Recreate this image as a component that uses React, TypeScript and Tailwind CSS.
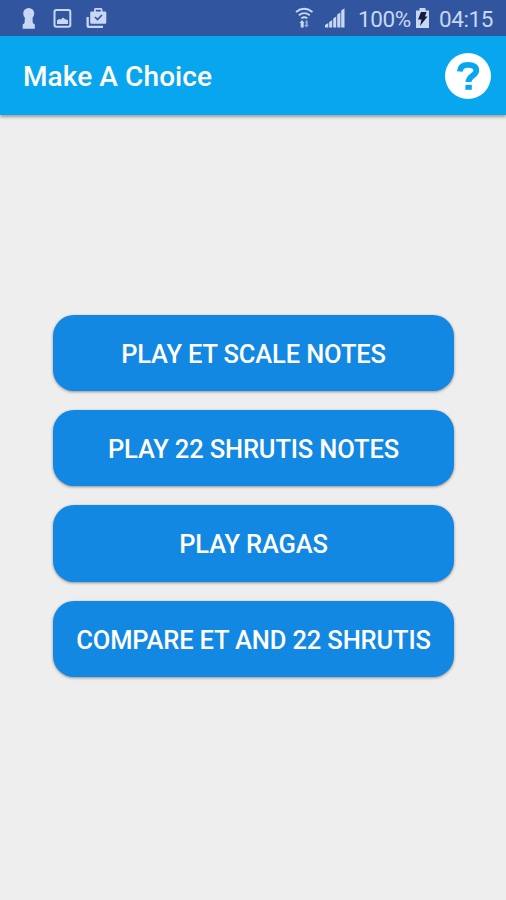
const choices = [
  "PLAY ET SCALE NOTES",
  "PLAY 22 SHRUTIS NOTES",
  "PLAY RAGAS",
  "COMPARE ET AND 22 SHRUTIS",
];

function StatusBar() {
  return (
    <div className="flex h-9 shrink-0 items-center bg-[#31569f] text-[22.5px] leading-9 tracking-[-0.4px] text-[#c8d7f3]">
      <svg width="120" height="36" viewBox="0 0 120 36" fill="currentColor">
        <circle cx="28.7" cy="13.5" r="5.500" />
        <path d="M25 15.500h7.400l.4 7.500 2 1.500v4.200H22.700v-4.200l1.900-1.500z" />
        <rect x="54.500" y="10" width="15.800" height="16.800" rx="1.800" fill="none" stroke="currentColor" strokeWidth="2" />
        <path d="M57 24v-3.500l2-1.500 2 .5 2-2 2.500 2 2.500.5v4z" />
        <path d="M86.500 17h2.300v8.800H103V28H88.500q-2 0-2-2z" />
        <path
          fillRule="evenodd"
          d="M91.500 11.500H94V9.500q0-1.500 1.500-1.500h5.500q1.500 0 1.500 1.500v2h2.500q1.300 0 1.300 1.300v9.700q0 1.300-1.300 1.300H91.500q-1.300 0-1.300-1.300v-9.700q0-1.300 1.300-1.300zm4.300 0h5V9.700h-5z"
        />
        <path d="m95 17 2.500 2.500 4.500-4.500" fill="none" stroke="#31569f" strokeWidth="1.700" />
      </svg>
      <div className="grow" />
      <svg width="56" height="36" viewBox="294 0 56 36" fill="currentColor" className="mr-2">
        <g fill="none" stroke="currentColor" strokeWidth="1.800">
          <path d="M296 12q8-6.500 16.500 0M298.800 15.300q5.500-4.300 11 0M301.300 18.400q3-2.300 6 0" />
        </g>
        <path d="M299.500 23l2.500-3 2.500 3h-.8v4.500h-3V23z" />
        <path d="M305.500 20.500h2.200V25h1.300l-2.500 2.500-2.500-2.500h1.500z" opacity=".65" />
        <path d="M325 25l3.300-2v4.500H325zM329.200 22l3-2v7.500h-3zM333.200 18.500l3-2v11h-3zM337.200 14.500l3.200-2v15h-3.200zM341.200 10.500l3.300-2.300v19.300h-3.300z" />
      </svg>
      <span className="w-[52px] pt-0.5 whitespace-nowrap">100%</span>
      <svg width="13" height="20" viewBox="416 8 13 20" fill="currentColor" className="ml-1.5">
        <path d="M419.500 8h6v2.500h3.500V28h-13V10.500h3.500z" />
        <path d="M421 12h5.500l-1.500 4.500h2.500L420 26l1.500-6.500H418z" fill="#101d40" />
      </svg>
      <span className="mr-2 ml-2.5 w-[59px] pt-0.5 whitespace-nowrap">04:15</span>
    </div>
  );
}

export default function App() {
  return (
    <main className="flex h-[900px] w-[506px] flex-col overflow-hidden bg-[#eeeeee] font-[Roboto,sans-serif]">
      <StatusBar />
      <header className="flex h-[79px] shrink-0 items-center justify-between bg-[#09a6f0] pr-[15px] pl-[23px] text-white shadow-[0_2px_3px_rgba(0,0,0,0.35)]">
        <h1 className="pt-0.5 text-[28px] font-medium tracking-[0.1px]">Make A Choice</h1>
        <svg width="46" height="46" viewBox="0 0 46 46">
          <circle cx="23" cy="23" r="23" fill="white" />
          <path
            d="M14.800 18.500c.4-4.600 3.600-6.700 8.200-6.700 5 0 8.300 2 8.300 5.700 0 5.300-7.800 5-7.800 11.500"
            fill="none"
            stroke="#09a6f0"
            strokeWidth="5.800"
          />
          <rect x="20.400" y="31.800" width="6.400" height="5" fill="#09a6f0" />
        </svg>
      </header>
      <div className="flex flex-col gap-[19px] pt-[199.5px] pr-[52px] pl-[53px]">
        {choices.map((label) => (
          <button
            key={label}
            className="flex h-[76.4px] items-center justify-center rounded-[21px] bg-[#1388e2] pt-0.5 text-[25.5px] font-medium tracking-[-0.15px] whitespace-nowrap text-white shadow-[0_1px_3px_rgba(0,0,0,0.4)]"
          >
            {label}
          </button>
        ))}
      </div>
    </main>
  );
}
